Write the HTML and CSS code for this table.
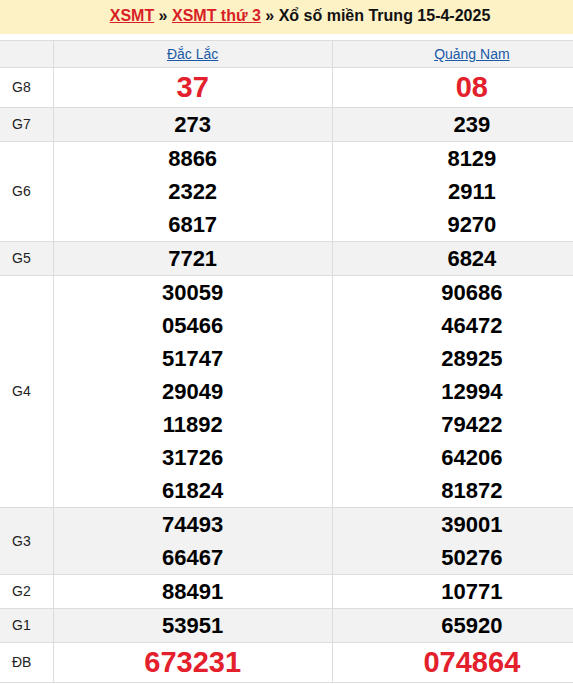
FILE: index.html
```html
<!DOCTYPE html>
<html lang="vi">
<head>
<meta charset="utf-8">
<link rel="stylesheet" href="styles.css">
</head>
<body>
<div class="page">
  <div class="title">
    <a href="#" class="crumb">XSMT</a> » <a href="#" class="crumb">XSMT thứ 3</a> » Xổ số miền Trung 15-4-2025
  </div>
  <table class="kq">
    <colgroup><col class="c-label"><col class="c-prov"><col class="c-prov"></colgroup>
    <thead>
      <tr class="alt head"><th></th><th><a href="#">Đắc Lắc</a></th><th><a href="#">Quảng Nam</a></th></tr>
    </thead>
    <tbody>
      <tr class="g8"><td class="lbl">G8</td><td class="big">37</td><td class="big">08</td></tr>
      <tr class="alt"><td class="lbl">G7</td><td>273</td><td>239</td></tr>
      <tr><td class="lbl">G6</td><td><div>8866</div><div>2322</div><div>6817</div></td><td><div>8129</div><div>2911</div><div>9270</div></td></tr>
      <tr class="alt"><td class="lbl">G5</td><td>7721</td><td>6824</td></tr>
      <tr><td class="lbl">G4</td><td><div>30059</div><div>05466</div><div>51747</div><div>29049</div><div>11892</div><div>31726</div><div>61824</div></td><td><div>90686</div><div>46472</div><div>28925</div><div>12994</div><div>79422</div><div>64206</div><div>81872</div></td></tr>
      <tr class="alt"><td class="lbl">G3</td><td><div>74493</div><div>66467</div></td><td><div>39001</div><div>50276</div></td></tr>
      <tr><td class="lbl">G2</td><td>88491</td><td>10771</td></tr>
      <tr class="alt"><td class="lbl">G1</td><td>53951</td><td>65920</td></tr>
      <tr class="db"><td class="lbl">ĐB</td><td class="big">673231</td><td class="big">074864</td></tr>
    </tbody>
  </table>
</div>
</body>
</html>
```

FILE: styles.css
```css
html, body {
  margin: 0;
  padding: 0;
  background: #fff;
}
.page {
  width: 573px;
  overflow: hidden;
  font-family: "Liberation Sans", Arial, sans-serif;
  color: #000;
}
.title {
  width: 600px;
  background: #fdf1c6;
  height: 34px;
  line-height: 32px;
  text-align: center;
  font-weight: bold;
  font-size: 16px;
  margin-bottom: 6px;
  color: #111;
}
.crumb {
  color: #d81f26;
  text-decoration: underline;
}
.kq {
  border-collapse: collapse;
  width: 612px;
  table-layout: fixed;
  border-top: 1px solid #dcdcdc;
}
.c-label { width: 53px; }
.c-prov { width: 279px; }
.kq th, .kq td {
  border: 1px solid #dcdcdc;
  padding: 0;
  text-align: center;
  vertical-align: middle;
}
.kq tr > :first-child { border-left: none; }
.kq th {
  height: 26px;
  font-weight: normal;
  font-size: 14px;
}
.kq th a {
  color: #1a5aa6;
  text-decoration: underline;
}
.alt { background: #f2f2f2; }
.kq td {
  font-weight: bold;
  font-size: 22px;
  line-height: 33px;
}
.kq td.lbl {
  font-weight: normal;
  font-size: 14px;
  color: #222;
  text-align: left;
  padding-left: 12px;
}
.kq td.big {
  color: #e3202b;
  font-size: 29px;
  line-height: 39px;
}
```
